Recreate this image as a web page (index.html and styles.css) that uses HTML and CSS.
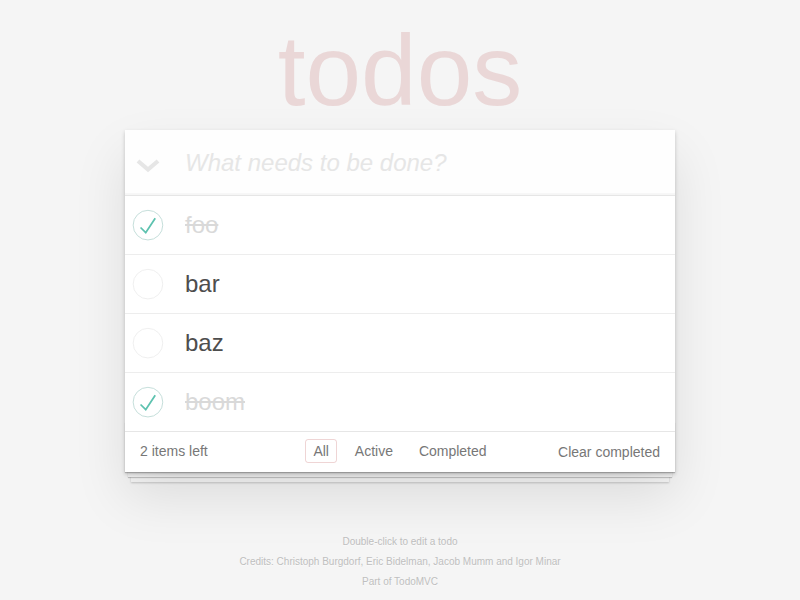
FILE: index.html
```
<!DOCTYPE html>
<html lang="en">
<head>
<meta charset="utf-8">
<title>todos</title>
<link rel="stylesheet" href="styles.css">
</head>
<body>
<div class="page">
  <h1 class="title">todos</h1>
  <section class="todoapp">
    <header class="header">
      <label class="toggle-all">
        <svg width="24" height="16" viewBox="0 0 24 16"><polyline points="2,3 12,11.5 22,3" fill="none" stroke="#e6e6e6" stroke-width="4.2" stroke-linejoin="miter"/></svg>
      </label>
      <input class="new-todo" placeholder="What needs to be done?">
    </header>
    <ul class="todo-list">
      <li class="todo completed">
        <svg class="check" width="40" height="40" viewBox="-10 -18 100 135"><circle cx="50" cy="50" r="50" fill="none" stroke="#bddad5" stroke-width="3"/><path fill="#5dc2af" d="M72 25L42 71 27 56l-4 4 20 20 34-52z"/></svg>
        <label class="todo-label">foo</label>
      </li>
      <li class="todo">
        <svg class="check" width="40" height="40" viewBox="-10 -18 100 135"><circle cx="50" cy="50" r="50" fill="none" stroke="#ededed" stroke-width="3"/></svg>
        <label class="todo-label">bar</label>
      </li>
      <li class="todo">
        <svg class="check" width="40" height="40" viewBox="-10 -18 100 135"><circle cx="50" cy="50" r="50" fill="none" stroke="#ededed" stroke-width="3"/></svg>
        <label class="todo-label">baz</label>
      </li>
      <li class="todo completed">
        <svg class="check" width="40" height="40" viewBox="-10 -18 100 135"><circle cx="50" cy="50" r="50" fill="none" stroke="#bddad5" stroke-width="3"/><path fill="#5dc2af" d="M72 25L42 71 27 56l-4 4 20 20 34-52z"/></svg>
        <label class="todo-label">boom</label>
      </li>
    </ul>
    <footer class="footer">
      <span class="todo-count"><strong class="count-num">2</strong> items left</span>
      <ul class="filters">
        <li class="filter-item"><a class="filter selected">All</a></li>
        <li class="filter-item"><a class="filter">Active</a></li>
        <li class="filter-item"><a class="filter">Completed</a></li>
      </ul>
      <span class="clear-completed">Clear completed</span>
    </footer>
  </section>
  <footer class="info">
    <p class="info-line">Double-click to edit a todo</p>
    <p class="info-line">Credits: Christoph Burgdorf, Eric Bidelman, Jacob Mumm and Igor Minar</p>
    <p class="info-line">Part of TodoMVC</p>
  </footer>
</div>
</body>
</html>
```
FILE: styles.css
```
html, body {
  margin: 0;
  padding: 0;
}
body {
  background: #f5f5f5;
  color: #4d4d4d;
  font-family: "Liberation Sans", Arial, Helvetica, sans-serif;
  font-size: 14px;
  line-height: 1.4em;
  font-weight: 300;
}
.page {
  max-width: 550px;
  margin: 0 auto;
  display: flow-root;
}
.title {
  margin: 13px 0 2px;
  font-size: 100px;
  line-height: 115px;
  height: 115px;
  font-weight: 100;
  text-align: center;
  color: rgba(175, 47, 47, 0.15);
}
.todoapp {
  background: #fff;
  margin: 0 0 40px 0;
  position: relative;
  box-shadow: 0 2px 4px 0 rgba(0, 0, 0, 0.2), 0 25px 50px 0 rgba(0, 0, 0, 0.1);
}
.header {
  display: flex;
  height: 65px;
  background: rgba(0, 0, 0, 0.003);
  box-shadow: inset 0 -2px 1px rgba(0, 0, 0, 0.03);
}
.toggle-all {
  width: 60px;
  flex: none;
  display: flex;
  align-items: center;
  justify-content: flex-start;
  padding: 6px 0 0 11px;
  box-sizing: border-box;
}
.new-todo {
  flex: 1;
  min-width: 0;
  border: none;
  outline: none;
  background: transparent;
  padding: 0 16px 0 0;
  font-family: inherit;
  font-size: 24px;
  line-height: 1.4em;
  color: inherit;
}
.new-todo::placeholder {
  font-style: italic;
  font-weight: 300;
  color: #e6e6e6;
}
.todo-list {
  margin: 0;
  padding: 0;
  list-style: none;
  border-top: 1px solid #e6e6e6;
}
.todo {
  display: flex;
  align-items: center;
  font-size: 24px;
  border-bottom: 1px solid #ededed;
}
.todo:last-child {
  border-bottom: none;
}
.check {
  flex: none;
  display: block;
}
.todo-label {
  display: block;
  flex: 1;
  padding: 15px 15px 15px 20px;
  line-height: 28px;
  word-break: break-all;
}
.completed .todo-label {
  color: #d9d9d9;
  text-decoration: line-through;
}
.footer {
  position: relative;
  color: #777;
  padding: 9px 15px 11px;
  height: 20px;
  border-top: 1px solid #e6e6e6;
  display: grid;
  grid-template-columns: 1fr auto 1fr;
  grid-template-rows: 20px;
  align-items: center;
}
.footer::before {
  content: '';
  position: absolute;
  right: 0;
  bottom: 0;
  left: 0;
  height: 50px;
  overflow: hidden;
  z-index: -1;
  box-shadow: 0 1px 1px rgba(0, 0, 0, 0.2),
              0 8px 0 -3px #f6f6f6,
              0 9px 1px -3px rgba(0, 0, 0, 0.2),
              0 16px 0 -6px #f6f6f6,
              0 17px 2px -6px rgba(0, 0, 0, 0.2);
}
.todo-count {
  text-align: left;
  line-height: 20px;
}
.count-num {
  font-weight: 300;
}
.filters {
  margin: 0;
  padding: 0;
  list-style: none;
  line-height: 20px;
  white-space: nowrap;
}
.filter-item {
  display: inline;
}
.filter {
  color: inherit;
  margin: 3px;
  padding: 3px 7px;
  border: 1px solid transparent;
  border-radius: 3px;
  text-decoration: none;
}
.filter.selected {
  border-color: rgba(175, 47, 47, 0.2);
}
.clear-completed {
  justify-self: end;
  align-self: start;
  line-height: 20px;
  padding-top: 1px;
}
.info {
  margin: 65px auto 0;
  color: #bfbfbf;
  font-size: 10px;
  text-shadow: 0 1px 0 rgba(255, 255, 255, 0.5);
  text-align: center;
}
.info-line {
  line-height: 1;
  margin: 10px 0;
}
```
